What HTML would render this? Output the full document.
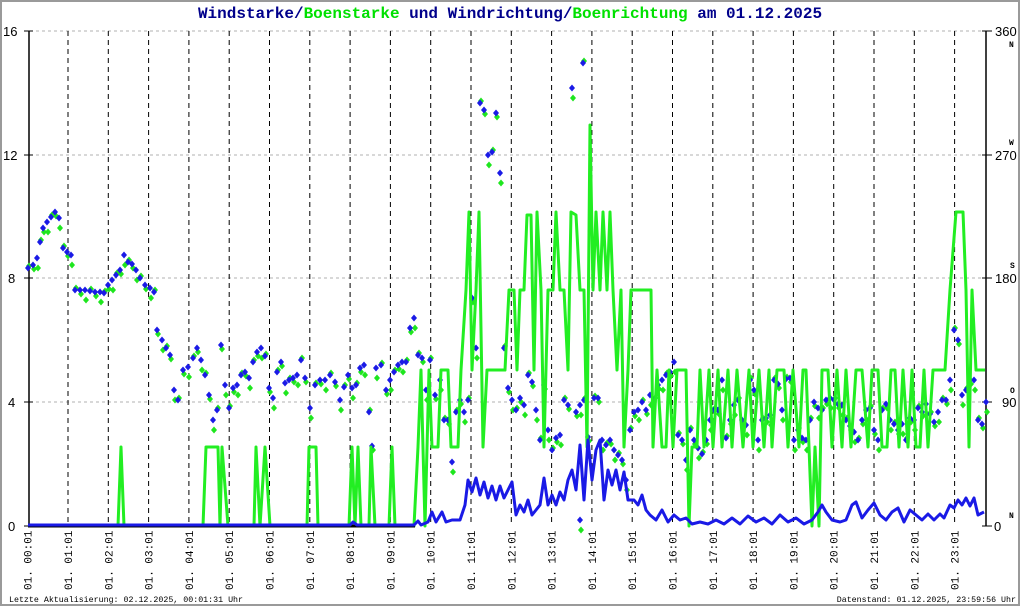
<!DOCTYPE html>
<html><head><meta charset="utf-8"><style>
html,body{margin:0;padding:0;background:#fff}
#w{position:relative;width:1016px;height:602px;border:2px solid #9a9a9a;overflow:hidden;background:#fff}
svg{position:absolute;left:-2px;top:-2px}
text{font-family:"Liberation Mono",monospace}
</style></head><body><div id="w">
<svg id="s" width="1020" height="606" viewBox="0 0 1020 606" xmlns="http://www.w3.org/2000/svg">
<defs><path id="d" d="M0,-3.5 L3,0 L0,3.5 L-3,0Z"/></defs>
<g stroke="#b0b0b0" stroke-dasharray="3,3" stroke-width="1">
<line x1="30" y1="31" x2="986" y2="31"/><line x1="30" y1="155" x2="986" y2="155"/><line x1="30" y1="278" x2="986" y2="278"/><line x1="30" y1="402" x2="986" y2="402"/>
</g>
<g id="vl" stroke="#000" stroke-dasharray="5,4" stroke-width="1"></g>
<g stroke="#000" stroke-width="1.5"><line x1="29" y1="31" x2="29" y2="526"/><line x1="986" y1="31" x2="986" y2="526"/></g>
<g stroke="#000" stroke-width="1"><line x1="24" y1="31" x2="33" y2="31"/><line x1="24" y1="155" x2="33" y2="155"/><line x1="24" y1="278" x2="33" y2="278"/><line x1="24" y1="402" x2="33" y2="402"/><line x1="24" y1="526" x2="33" y2="526"/>
<line x1="982" y1="31" x2="992" y2="31"/><line x1="982" y1="155" x2="992" y2="155"/><line x1="982" y1="278" x2="992" y2="278"/><line x1="982" y1="402" x2="992" y2="402"/><line x1="982" y1="526" x2="992" y2="526"/></g>
<g font-size="13" fill="#000">
<text x="3" y="36" style="font-family:'Liberation Sans',sans-serif">16</text><text x="3" y="160" style="font-family:'Liberation Sans',sans-serif">12</text><text x="8" y="283" style="font-family:'Liberation Sans',sans-serif">8</text><text x="8" y="407" style="font-family:'Liberation Sans',sans-serif">4</text><text x="8" y="531" style="font-family:'Liberation Sans',sans-serif">0</text>
<text x="995" y="36" style="font-family:'Liberation Sans',sans-serif">360</text><text x="995" y="160" style="font-family:'Liberation Sans',sans-serif">270</text><text x="995" y="283" style="font-family:'Liberation Sans',sans-serif">180</text><text x="1002" y="407" style="font-family:'Liberation Sans',sans-serif">90</text><text x="994" y="531" style="font-family:'Liberation Sans',sans-serif">0</text>
</g>
<g font-size="8" font-weight="bold" fill="#000"><text x="1009" y="47">N</text><text x="1009" y="145">W</text><text x="1010" y="268">S</text><text x="1010" y="393">O</text><text x="1009" y="518">N</text></g>
<text x="510" y="18" text-anchor="middle" font-size="16" font-weight="bold"><tspan fill="#00008b">Windstarke/</tspan><tspan fill="#00e000">Boenstarke</tspan><tspan fill="#00008b"> und </tspan><tspan fill="#00008b">Windrichtung/</tspan><tspan fill="#00e000">Boenrichtung</tspan><tspan fill="#00008b"> am 01.12.2025</tspan></text>
<g id="gd" fill="#1ee61e"></g>
<g id="bd" fill="#1a1ae6"></g>
<polyline fill="none" stroke="#22ee22" stroke-width="3" stroke-linejoin="round" points="28,526 118,526 121,447 124,526 203,526 206,447 218,447 220,526 222,447 228,526 254,526 256,447 260,526 265,447 270,526 307,526 309,447 316,447 318,526 349,526 352,447 355,526 358,447 361,526 369,526 371,447 375,526 389,526 392,447 395,526 414,526 418,447 421,370 425,526 429,370 432,447 438,447 441,370 448,370 451,447 458,447 461,370 466,290 469,212 472,370 476,290 479,212 483,447 487,370 492,370 496,370 501,370 505,370 509,290 514,290 517,370 520,290 524,290 527,215 531,215 534,370 537,212 541,290 544,447 548,290 553,290 556,212 560,290 564,290 568,370 571,212 576,215 580,290 584,290 587,447 590,125 593,290 596,212 600,290 603,212 607,290 610,212 613,290 617,370 621,290 624,447 628,370 631,290 634,290 651,290 653,447 657,370 662,447 666,447 669,370 673,447 677,370 682,370 686,370 689,526 692,447 697,447 700,370 704,447 709,370 713,447 718,370 722,447 728,370 732,447 737,370 743,447 749,370 753,447 759,370 764,447 769,370 772,447 777,370 784,370 788,447 793,370 799,447 803,370 806,370 809,447 812,526 815,447 819,526 822,370 828,370 832,447 837,370 842,447 846,370 851,447 856,370 862,370 868,447 872,370 878,370 882,447 887,447 891,370 895,370 899,447 903,370 908,447 912,370 916,447 920,447 924,370 928,447 933,370 945,370 950,290 956,212 963,212 966,290 969,447 972,290 976,370 985,370"/>
<polyline fill="none" stroke="#000" stroke-width="3" points="28,526 415,526"/>
<polyline fill="none" stroke="#1a1ae6" stroke-width="3" stroke-linejoin="round" points="28,525 350,525 353,522 357,525 414,525 418,521 421,525 428,522 432,512 436,522 442,512 446,522 452,520 460,520 465,505 468,480 472,492 476,478 480,495 484,482 488,498 492,486 496,500 500,486 504,498 508,490 512,482 516,515 520,505 524,512 528,500 532,515 536,510 540,505 544,478 548,505 552,495 556,505 560,492 564,500 568,480 572,470 576,490 580,445 584,500 588,440 592,480 596,450 600,440 604,500 608,470 612,485 616,470 620,490 624,472 628,500 634,500 638,505 642,495 646,510 650,515 656,520 662,510 668,522 674,515 680,520 686,518 692,524 700,522 708,524 716,520 724,524 732,518 740,524 748,516 756,522 764,518 772,524 780,515 788,522 796,518 804,524 812,520 818,512 822,505 826,512 832,520 840,522 846,520 852,505 856,502 862,518 868,510 874,503 880,515 886,520 892,512 898,508 904,522 910,510 916,515 922,520 928,514 934,520 940,514 944,518 950,505 954,508 958,500 962,505 966,498 970,506 974,498 978,515 984,512"/>
<g font-size="8.3" fill="#000"><text x="9" y="602">Letzte Aktualisierung: 02.12.2025, 00:01:31 Uhr</text><text x="1016" y="602" text-anchor="end">Datenstand: 01.12.2025, 23:59:56 Uhr</text></g>
<g id="hl" font-size="11" fill="#000"></g>
</svg></div>
<script>
var s="http://www.w3.org/2000/svg",vl=document.getElementById('vl'),hl=document.getElementById('hl');
for(var h=0;h<24;h++){var x=27.7+40.3*h;
if(h>0){var l=document.createElementNS(s,'line');l.setAttribute('x1',x);l.setAttribute('x2',x);l.setAttribute('y1',31);l.setAttribute('y2',526);vl.appendChild(l);}
var t=document.createElementNS(s,'text');var hh=(h<10?'0':'')+h;t.textContent='01. '+hh+':01';
t.setAttribute('transform','translate('+(x+4)+',590) rotate(-90)');hl.appendChild(t);}
var P=[[28,268],[33,265],[37,258],[40,242],[43,228],[47,222],[51,217],[55,212],[59,218],[63,248],[67,252],[71,255],[75,290],[80,290],[85,290],[90,291],[95,292],[100,292],[104,293],[108,285],[112,280],[116,275],[120,270],[124,255],[128,262],[132,264],[136,270],[140,278],[145,285],[150,288],[154,292],[157,330],[162,340],[166,348],[170,355],[174,390],[178,400],[183,370],[188,367],[193,358],[197,348],[201,360],[205,375],[209,395],[213,420],[217,410],[221,345],[225,385],[229,408],[233,388],[237,385],[241,375],[245,372],[249,378],[253,362],[257,352],[261,348],[265,356],[269,388],[273,398],[277,372],[281,362],[285,383],[289,380],[293,378],[297,375],[301,360],[305,378],[310,408],[315,385],[320,380],[325,380],[330,375],[335,382],[340,400],[344,387],[348,375],[352,388],[356,385],[360,368],[364,365],[369,412],[372,446],[376,368],[381,365],[386,390],[390,380],[394,372],[398,365],[402,362],[406,362],[410,328],[414,318],[418,355],[422,358],[426,390],[430,360],[435,395],[440,380],[444,420],[448,420],[452,462],[456,412],[460,400],[464,412],[468,400],[472,298],[476,348],[480,103],[484,110],[488,155],[492,152],[496,113],[500,173],[504,348],[508,388],[512,400],[516,410],[520,398],[524,405],[528,375],[532,382],[536,410],[540,440],[544,385],[548,430],[552,450],[556,438],[560,435],[564,400],[568,405],[572,88],[583,63],[576,412],[580,405],[584,400],[588,437],[580,520],[594,398],[598,398],[602,440],[606,445],[610,440],[614,450],[618,455],[622,460],[626,480],[630,430],[634,412],[638,410],[642,402],[646,410],[650,395],[654,400],[658,385],[662,380],[666,375],[670,372],[674,362],[678,435],[682,440],[686,460],[690,430],[694,440],[698,448],[702,454],[706,440],[710,420],[714,410],[718,410],[722,380],[726,438],[730,420],[734,405],[738,400],[742,420],[746,425],[750,380],[754,390],[758,440],[762,420],[766,418],[770,415],[774,380],[778,384],[782,410],[786,379],[790,378],[794,440],[798,430],[802,438],[806,440],[810,420],[814,402],[818,408],[822,410],[826,400],[830,398],[834,400],[838,404],[842,405],[846,420],[850,426],[854,432],[858,440],[862,420],[866,410],[870,408],[874,430],[878,440],[882,410],[886,404],[890,420],[894,424],[898,430],[902,424],[906,440],[910,418],[914,420],[918,408],[922,412],[926,404],[930,414],[934,422],[938,412],[942,400],[946,400],[950,380],[954,330],[958,340],[962,395],[966,390],[970,380],[974,380],[978,420],[982,424],[986,402]];
var gd=document.getElementById('gd'),bd=document.getElementById('bd');
P.forEach(function(p,i){var u=document.createElementNS(s,'use');u.setAttribute('href','#d');u.setAttribute('x',p[0]+1);u.setAttribute('y',p[1]+((i%3)-1)*6+4);gd.appendChild(u);
var b=document.createElementNS(s,'use');b.setAttribute('href','#d');b.setAttribute('x',p[0]);b.setAttribute('y',p[1]);bd.appendChild(b);});
</script>
</body></html>
